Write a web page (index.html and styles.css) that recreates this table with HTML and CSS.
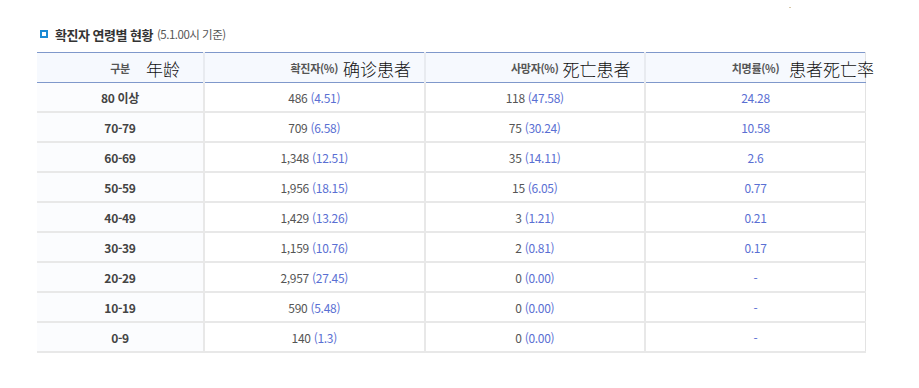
FILE: index.html
```html
<!DOCTYPE html>
<html lang="ko">
<head>
  <meta charset="UTF-8">
  <title>확진자 연령별 현황</title>
  <link rel="stylesheet" href="styles.css">
</head>
<body>
  <span class="corner-dot"></span>
  <div class="section">
    <h3 class="section-title">
      <span class="title-icon"></span>
      확진자 연령별 현황
      <small>(5.1.00시 기준)</small>
    </h3>
    <table class="age-table">
      <thead>
        <tr>
          <th>구분<span class="note note-age">年龄</span></th>
          <th>확진자(%)<span class="note note-confirmed">确诊患者</span></th>
          <th>사망자(%)<span class="note note-death">死亡患者</span></th>
          <th>치명률(%)<span class="note note-rate">患者死亡率</span></th>
        </tr>
      </thead>
      <tbody>
        <tr><td>80 이상</td><td>486 <em>(4.51)</em></td><td>118 <em>(47.58)</em></td><td class="rate">24.28</td></tr>
        <tr><td>70-79</td><td>709 <em>(6.58)</em></td><td>75 <em>(30.24)</em></td><td class="rate">10.58</td></tr>
        <tr><td>60-69</td><td>1,348 <em>(12.51)</em></td><td>35 <em>(14.11)</em></td><td class="rate">2.6</td></tr>
        <tr><td>50-59</td><td>1,956 <em>(18.15)</em></td><td>15 <em>(6.05)</em></td><td class="rate">0.77</td></tr>
        <tr><td>40-49</td><td>1,429 <em>(13.26)</em></td><td>3 <em>(1.21)</em></td><td class="rate">0.21</td></tr>
        <tr><td>30-39</td><td>1,159 <em>(10.76)</em></td><td>2 <em>(0.81)</em></td><td class="rate">0.17</td></tr>
        <tr><td>20-29</td><td>2,957 <em>(27.45)</em></td><td>0 <em>(0.00)</em></td><td class="rate">-</td></tr>
        <tr><td>10-19</td><td>590 <em>(5.48)</em></td><td>0 <em>(0.00)</em></td><td class="rate">-</td></tr>
        <tr><td>0-9</td><td>140 <em>(1.3)</em></td><td>0 <em>(0.00)</em></td><td class="rate">-</td></tr>
      </tbody>
    </table>
  </div>
</body>
</html>
```

FILE: styles.css
```css
body {
  margin: 0;
  background: #fff;
  font-family: "Noto Sans CJK KR", "Noto Sans", sans-serif;
  color: #444;
}
.corner-dot {
  position: absolute;
  left: 789px;
  top: 7px;
  width: 2px;
  height: 1px;
  background: #d8c8a8;
}
.section {
  width: 829px;
  margin: 0 0 0 37px;
  padding-top: 24px;
}
.section-title {
  display: flex;
  align-items: center;
  margin: 0 0 8px 3px;
  height: 20px;
  font-size: 13px;
  font-weight: 700;
  color: #333;
  letter-spacing: -0.5px;
}
.section-title small {
  margin-left: 4px;
  font-size: 11.5px;
  font-weight: 400;
  color: #555;
}
.title-icon {
  width: 4px;
  height: 4px;
  border: 2px solid #1b8ad3;
  margin-right: 7px;
}
.age-table {
  width: 100%;
  border-collapse: collapse;
  table-layout: fixed;
  border-top: 1px solid #7f98cb;
  border-right: 1px solid #e3e3e3;
}
.age-table th {
  position: relative;
  height: 29px;
  padding: 0;
  background: #f6f9fe;
  border-bottom: 1px solid #7f98cb;
  border-left: 2px solid #e8ebf0;
  font-size: 11px;
  font-weight: 700;
  color: #555;
  letter-spacing: -0.3px;
}
.age-table th:first-child { width: 166px; border-left: none; }
.note {
  position: absolute;
  top: 3px;
  font-family: "Noto Sans CJK SC", sans-serif;
  font-size: 17px;
  font-weight: 300;
  color: #111;
  letter-spacing: 0;
  white-space: nowrap;
}
.note-age { left: 109px; }
.note-confirmed { left: 138px; }
.note-death { left: 137px; }
.note-rate { left: 143px; }
.age-table td {
  height: 28px;
  padding: 0;
  text-align: center;
  border-bottom: 2px solid #e8e8e8;
  border-left: 2px solid #e8e8e8;
  font-size: 12px;
  color: #555;
  letter-spacing: -0.3px;
}
.age-table td:first-child {
  border-left: none;
  background: #fbfcfe;
  font-weight: 700;
  color: #444;
}
.age-table em {
  font-style: normal;
  color: #5a6fd3;
}
.age-table td.rate { color: #5a6fd3; }
```
